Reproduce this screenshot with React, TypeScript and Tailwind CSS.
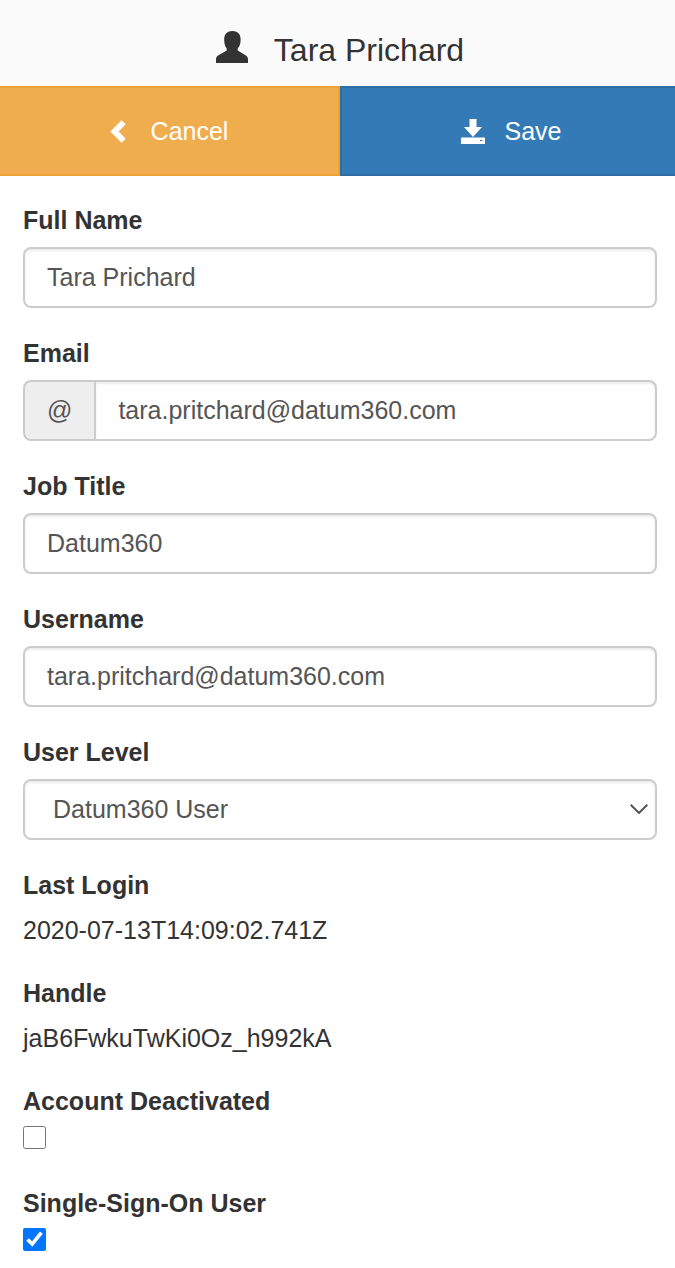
import { useState } from "react";
import type { ReactNode } from "react";

const controlClass =
  "block w-full h-[61px] border-2 border-[#ccc] rounded-lg bg-white px-[22px] text-[25px] text-[#555] shadow-[inset_0_2px_2px_rgba(0,0,0,0.075)] outline-none focus:border-[#66afe9]";

function UserIcon() {
  return (
    <svg viewBox="0 0 32 32" className="w-8 h-8" fill="currentColor" aria-hidden="true">
      <path d="M16.400 0c5.100 0 8.200 3.200 8.200 8 0 1.600-.1 3-.3 4.200-.4 2.200-1.400 3.800-2.600 5.200v2.200l7.800 4.700c1.700 1 2.500 2.200 2.500 4V32H0v-3.700c0-1.800.8-3 2.500-4l8.200-4.700v-2.200c-1.100-1.400-1.900-3-2.200-5.200-.2-1.200-.3-2.600-.3-4.200 0-4.800 3.100-8 8.200-8z" />
    </svg>
  );
}

function ChevronIcon() {
  return (
    <svg viewBox="0 0 16 23" className="w-4 h-[23px]" fill="currentColor" aria-hidden="true">
      <path d="M11.500.3 15.700 4.300 8.600 11.500 15.700 18.700 11.500 22.700.3 11.500z" />
    </svg>
  );
}

function SaveIcon() {
  return (
    <svg viewBox="0 0 24 25" className="w-6 h-[25px]" fill="currentColor" aria-hidden="true">
      <path d="M8.500 0h7v8h5.500L12 18 3 8h5.500z" />
      <path
        fillRule="evenodd"
        d="M.5 18.500h23q.5 0 .5.500v5.500q0 .5-.5.500H.5q-.5 0-.5-.5V19q0-.5.5-.5zM19 21v1h2.500v-1z"
      />
    </svg>
  );
}

function Field({ id, label, children }: { id: string; label: string; children: ReactNode }) {
  return (
    <div className="mb-[27px]">
      <label htmlFor={id} className="block mb-[9px] text-[25px] leading-9 font-bold">
        {label}
      </label>
      {children}
    </div>
  );
}

function StaticField({ label, value }: { label: string; value: string }) {
  return (
    <dl className="mb-[27px] text-[25px] leading-9">
      <dt className="mb-[9px] font-bold">{label}</dt>
      <dd>{value}</dd>
    </dl>
  );
}

function CheckField({
  id,
  label,
  checked,
  setChecked,
}: {
  id: string;
  label: string;
  checked: boolean;
  setChecked: (value: boolean) => void;
}) {
  return (
    <div className="mb-9">
      <label htmlFor={id} className="block mb-[7px] text-[25px] leading-9 font-bold">
        {label}
      </label>
      <input
        id={id}
        type="checkbox"
        checked={checked}
        onChange={(e) => setChecked(e.target.checked)}
        className="block w-[23px] h-[23px] accent-[#0075ff]"
      />
    </div>
  );
}

export default function App() {
  const [fullName, setFullName] = useState("Tara Prichard");
  const [email, setEmail] = useState("tara.pritchard@datum360.com");
  const [jobTitle, setJobTitle] = useState("Datum360");
  const [username, setUsername] = useState("tara.pritchard@datum360.com");
  const [level, setLevel] = useState("Datum360 User");
  const [deactivated, setDeactivated] = useState(false);
  const [sso, setSso] = useState(true);

  return (
    <form
      onSubmit={(e) => e.preventDefault()}
      className="overflow-hidden bg-white text-[#333] font-['Liberation_Sans',Arial,sans-serif]"
    >
      {/* bleeds past both edges so the outer button borders are clipped */}
      <div className="-ml-[2px] -mr-[7px]">
        <header className="flex items-center justify-center gap-[26px] h-[86px] pt-2 bg-[#fafafa]">
          <UserIcon />
          <h1 className="pt-[6px] text-[32px] leading-10">Tara Prichard</h1>
        </header>

        <div className="flex">
          <button
            type="button"
            className="flex flex-1 items-center justify-center gap-[25px] h-[90px] border-2 border-[#eea236] bg-[#f0ad4e] text-[25px] text-white"
          >
            <ChevronIcon />
            <span className="pt-[2px]">Cancel</span>
          </button>
          <button
            type="submit"
            className="flex flex-1 items-center justify-center gap-5 h-[90px] border-2 border-[#2e6da4] bg-[#337ab7] text-[25px] text-white"
          >
            <SaveIcon />
            <span className="pt-[2px]">Save</span>
          </button>
        </div>
      </div>

      <div className="pt-[26px] pl-[23px] pr-[18px]">
        <Field id="fullName" label="Full Name">
          <input
            id="fullName"
            type="text"
            value={fullName}
            onChange={(e) => setFullName(e.target.value)}
            className={controlClass}
          />
        </Field>
        <Field id="email" label="Email">
          <div className="flex">
            <span className="flex items-center h-[61px] px-[22px] border-2 border-r-0 border-[#ccc] rounded-l-lg bg-[#eee] text-[25px] text-[#555]">
              @
            </span>
            <input
              id="email"
              type="email"
              value={email}
              onChange={(e) => setEmail(e.target.value)}
              className={`${controlClass} flex-1 rounded-l-none`}
            />
          </div>
        </Field>
        <Field id="jobTitle" label="Job Title">
          <input
            id="jobTitle"
            type="text"
            value={jobTitle}
            onChange={(e) => setJobTitle(e.target.value)}
            className={controlClass}
          />
        </Field>
        <Field id="username" label="Username">
          <input
            id="username"
            type="text"
            value={username}
            onChange={(e) => setUsername(e.target.value)}
            className={controlClass}
          />
        </Field>
        <Field id="level" label="User Level">
          <div className="relative">
            <select
              id="level"
              value={level}
              onChange={(e) => setLevel(e.target.value)}
              className={`${controlClass} appearance-none pl-7`}
            >
              <option>Datum360 User</option>
            </select>
            <svg
              viewBox="0 0 18 10"
              className="absolute right-[9px] top-[25px] w-[18px] h-[10px] pointer-events-none"
              fill="none"
              stroke="#555"
              strokeWidth="2"
              aria-hidden="true"
            >
              <path d="M.7.7 9 9 17.300.7" />
            </svg>
          </div>
        </Field>
        <StaticField label="Last Login" value="2020-07-13T14:09:02.741Z" />
        <StaticField label="Handle" value="jaB6FwkuTwKi0Oz_h992kA" />
        <CheckField
          id="deactivated"
          label="Account Deactivated"
          checked={deactivated}
          setChecked={setDeactivated}
        />
        <CheckField id="sso" label="Single-Sign-On User" checked={sso} setChecked={setSso} />
      </div>
    </form>
  );
}
